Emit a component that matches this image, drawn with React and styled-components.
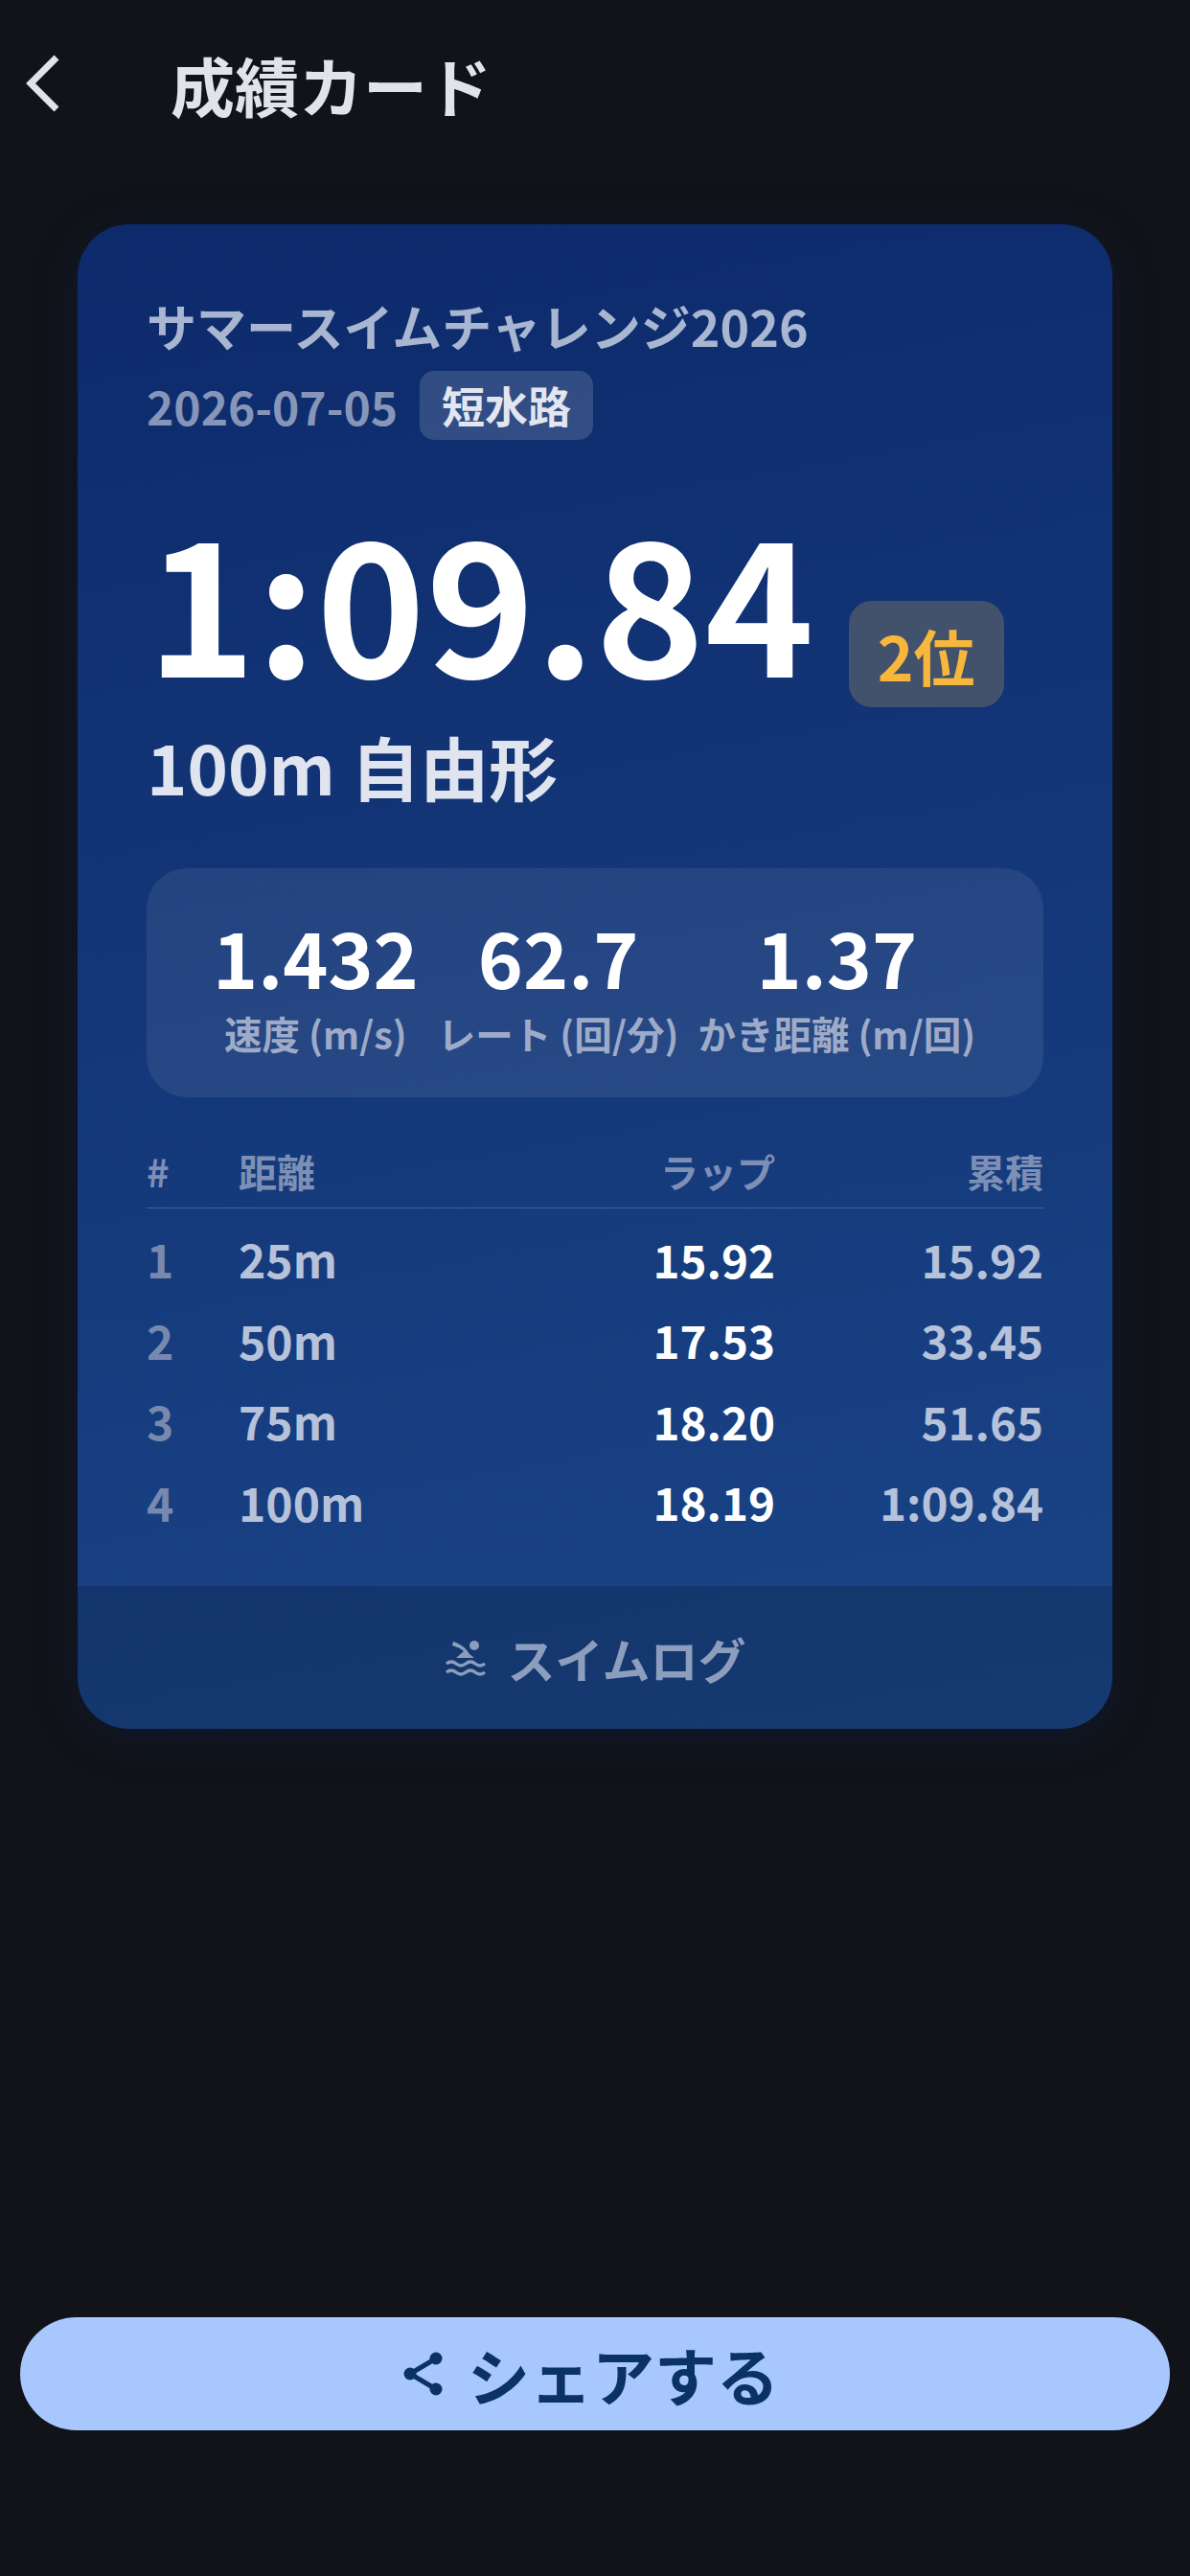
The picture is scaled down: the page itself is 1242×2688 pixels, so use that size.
import React from "react";
import styled, { createGlobalStyle } from "styled-components";

const Global = createGlobalStyle`
  html, body { margin: 0; padding: 0; background: #111318; }
  * { box-sizing: border-box; }
`;

const Page = styled.div`
  width: 1242px;
  height: 2688px;
  background: #111318;
  display: flex;
  flex-direction: column;
  font-family: "Noto Sans CJK JP", "Noto Sans", sans-serif;
  overflow: hidden;
`;
const Header = styled.header`
  height: 174px;
  display: flex;
  align-items: center;
  padding-left: 24px;
  gap: 114px;
`;
const BackIcon = styled.svg`
  width: 40px;
  height: 60px;
  flex: none;
`;
const Title = styled.h1`
  margin: 0;
  font-weight: 700;
  font-size: 67px;
  line-height: 1;
  color: #e2e2e9;
`;
const Card = styled.section`
  margin: 60px 81px 0;
  width: 1080px;
  height: 1570px;
  border-radius: 54px;
  background: linear-gradient(170deg, #0d2a6b 0%, #1a4587 100%);
  box-shadow: 0 8px 48px rgba(13, 42, 107, 0.25);
  display: flex;
  flex-direction: column;
  overflow: hidden;
`;
const CardBody = styled.div`
  flex: 1;
  padding: 73px 72px 0;
  display: flex;
  flex-direction: column;
`;
const EventName = styled.div`
  font-size: 52px;
  font-weight: 700;
  line-height: 66px;
  color: #a9b6d1;
`;
const MetaRow = styled.div`
  display: flex;
  align-items: center;
  gap: 23px;
  margin-top: 14px;
`;
const DateText = styled.span`
  font-weight: 700;
  font-size: 48px;
  color: #8796b8;
  line-height: 72px;
`;
const Tag = styled.span`
  height: 72px;
  padding: 0 23px;
  border-radius: 15px;
  background: rgba(255, 255, 255, 0.15);
  color: #e2e6f0;
  font-size: 45px;
  font-weight: 700;
  line-height: 72px;
`;
const TimeRow = styled.div`
  display: flex;
  align-items: flex-end;
  margin-top: 56px;
`;
const TimeText = styled.div`
  font-size: 193.5px;
  font-weight: 700;
  line-height: 216px;
  color: #fff;
`;
const RankBadge = styled.div`
  margin-left: 36px;
  margin-bottom: -7px;
  width: 162px;
  height: 111px;
  border-radius: 24px;
  background: #42516c;
  color: #f6b73c;
  font-size: 64px;
  font-weight: 700;
  display: flex;
  align-items: center;
  justify-content: center;
`;
const EventLabel = styled.div`
  margin-top: 26px;
  font-size: 72px;
  font-weight: 700;
  line-height: 84px;
  color: #dfe4ef;
`;
const StatPanel = styled.div`
  margin-top: 65px;
  height: 239px;
  border-radius: 42px;
  background: rgba(255, 255, 255, 0.08);
  padding: 41px 0 0 69px;
  display: flex;
  gap: 20px;
`;
const Stat = styled.div`
  display: flex;
  flex-direction: column;
  align-items: center;
`;
const StatValue = styled.div`
  font-size: 80px;
  font-weight: 700;
  line-height: 100px;
  color: #fff;
`;
const StatLabel = styled.div`
  font-weight: 700;
  font-size: 39.5px;
  line-height: 62px;
  color: #9eabc8;
  white-space: nowrap;
`;
const LapTable = styled.div`
  margin-top: 52px;
  display: flex;
  flex-direction: column;
`;
const LapRow = styled.div`
  display: grid;
  grid-template-columns: 96px 1fr 240px 280px;
  align-items: center;
  height: 84.5px;
`;
const LapHead = styled(LapRow)`
  height: 50px;
  margin-bottom: 13px;
`;
const Divider = styled.div`
  height: 1px;
  background: rgba(255, 255, 255, 0.2);
  margin-bottom: 10px;
`;
const HeadCell = styled.div`
  font-weight: 700;
  font-size: 40px;
  color: #7d8fb4;
  line-height: 50px;
  text-align: ${(p) => (p.$right ? "right" : "left")};
`;
const IndexCell = styled.div`
  font-weight: 700;
  font-size: 48px;
  color: #7889ae;
`;
const DistCell = styled.div`
  font-weight: 700;
  font-size: 48px;
  color: #b6c2da;
`;
const LapCell = styled.div`
  font-size: 47.5px;
  font-weight: 700;
  color: #fff;
  text-align: right;
`;
const TotalCell = styled.div`
  font-weight: 700;
  font-size: 47.5px;
  color: #b6c2da;
  text-align: right;
`;
const Footer = styled.div`
  height: 149px;
  background: rgba(0, 0, 0, 0.16);
  display: flex;
  align-items: center;
  justify-content: center;
  gap: 22px;
  color: #8c9dbd;
  font-size: 50px;
  font-weight: 700;
`;
const PoolIcon = styled.svg`
  width: 44px;
  height: 44px;
`;
const ShareButton = styled.button`
  margin: auto 21px 152px;
  width: 1200px;
  height: 118px;
  border: 0;
  border-radius: 59px;
  background: #a8c7ff;
  color: #0a3263;
  font-family: inherit;
  font-size: 65px;
  font-weight: 700;
  display: flex;
  align-items: center;
  justify-content: center;
  gap: 20px;
  padding: 0 13px 0 0;
`;
const ShareIcon = styled.svg`
  width: 52px;
  height: 52px;
`;

const laps = [
  ["1", "25m", "15.92", "15.92"],
  ["2", "50m", "17.53", "33.45"],
  ["3", "75m", "18.20", "51.65"],
  ["4", "100m", "18.19", "1:09.84"],
];
const stats = [
  ["1.432", "速度 (m/s)"],
  ["62.7", "レート (回/分)"],
  ["1.37", "かき距離 (m/回)"],
];

export default function App() {
  return (
    <Page>
      <Global />
      <Header>
        <BackIcon viewBox="0 0 40 60">
          <path d="M35 3 L8 30 L35 57" fill="none" stroke="#e2e2e9" strokeWidth="7" />
        </BackIcon>
        <Title>成績カード</Title>
      </Header>
      <Card>
        <CardBody>
          <EventName>サマースイムチャレンジ2026</EventName>
          <MetaRow>
            <DateText>2026-07-05</DateText>
            <Tag>短水路</Tag>
          </MetaRow>
          <TimeRow>
            <TimeText>1:09.84</TimeText>
            <RankBadge>2位</RankBadge>
          </TimeRow>
          <EventLabel>100m 自由形</EventLabel>
          <StatPanel>
            {stats.map(([v, l]) => (
              <Stat key={l}>
                <StatValue>{v}</StatValue>
                <StatLabel>{l}</StatLabel>
              </Stat>
            ))}
          </StatPanel>
          <LapTable>
            <LapHead>
              <HeadCell>#</HeadCell>
              <HeadCell>距離</HeadCell>
              <HeadCell $right>ラップ</HeadCell>
              <HeadCell $right>累積</HeadCell>
            </LapHead>
            <Divider />
            {laps.map(([i, d, l, t]) => (
              <LapRow key={i}>
                <IndexCell>{i}</IndexCell>
                <DistCell>{d}</DistCell>
                <LapCell>{l}</LapCell>
                <TotalCell>{t}</TotalCell>
              </LapRow>
            ))}
          </LapTable>
        </CardBody>
        <Footer>
          <PoolIcon viewBox="0 0 44 44">
            <circle cx="31" cy="9" r="5" fill="#8c9dbd" />
            <path d="M9 5 C16 7 22 11 26 18 L31 22 L12 22 L20 15 Q15 11 8 9 Z" fill="#8c9dbd" />
            <path d="M2 28 q5 -4 10 0 t10 0 t10 0 t10 0 M2 37 q5 -4 10 0 t10 0 t10 0 t10 0" fill="none" stroke="#8c9dbd" strokeWidth="3.5" />
          </PoolIcon>
          スイムログ
        </Footer>
      </Card>
      <ShareButton>
        <ShareIcon viewBox="0 0 52 52">
          <path d="M39 10 L12 26 L39 42" fill="none" stroke="#0a3263" strokeWidth="5" />
          <circle cx="39" cy="10" r="6.5" fill="#0a3263" />
          <circle cx="12" cy="26" r="6.5" fill="#0a3263" />
          <circle cx="39" cy="42" r="6.5" fill="#0a3263" />
        </ShareIcon>
        シェアする
      </ShareButton>
    </Page>
  );
}
